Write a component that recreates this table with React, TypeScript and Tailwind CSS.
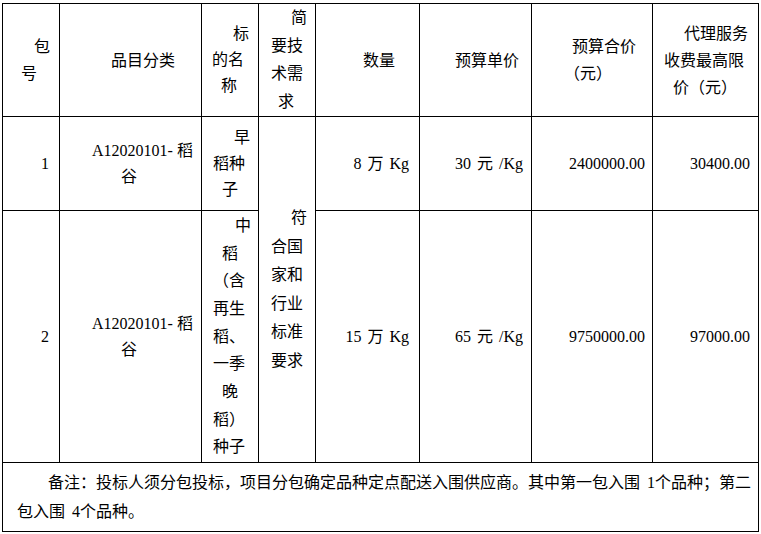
import React from "react";

function Line({ className, children }: { className: string; children: React.ReactNode }) {
  return <div className={"whitespace-nowrap " + className}>{children}</div>;
}

const cell = "bg-white flex flex-col justify-center";
const num = "bg-white flex items-center justify-end whitespace-nowrap leading-none [word-spacing:2px]";

function Code() {
  return (
    <>
      A12020101-<span className="inline-block w-[4px]"></span>稻
    </>
  );
}

export default function App() {
  return (
    <div className="w-[761px] h-[534px] bg-white pt-[3px] pl-[2px] font-['Liberation_Serif','Noto_Sans_CJK_SC',serif] text-[16px] text-black">
      <div className="grid w-[757px] grid-cols-[56px_141px_56px_56px_103px_111px_120px_105px] grid-rows-[112px_93px_251px_68px] gap-px border border-black bg-black">
        {/* header */}
        <div className={cell + " leading-[27px]"}>
          <Line className="pl-[31px]">包</Line>
          <Line className="pl-[18px]">号</Line>
        </div>
        <div className={cell + " leading-[27px]"}>
          <Line className="pl-[51px]">品目分类</Line>
        </div>
        <div className={cell + " leading-[26px]"}>
          <Line className="pl-[31px]">标</Line>
          <Line className="pl-[10px]">的名</Line>
          <Line className="pl-[19px]">称</Line>
        </div>
        <div className={cell + " leading-[28px]"}>
          <Line className="pl-[32px]">简</Line>
          <Line className="pl-[12px]">要技</Line>
          <Line className="pl-[12px]">术需</Line>
          <Line className="pl-[19px]">求</Line>
        </div>
        <div className={cell + " leading-[27px]"}>
          <Line className="pl-[47px]">数量</Line>
        </div>
        <div className={cell + " leading-[27px]"}>
          <Line className="pl-[35px]">预算单价</Line>
        </div>
        <div className={cell + " leading-[27px]"}>
          <Line className="pl-[40px]">预算合价</Line>
          <Line className="pl-[32px]">（元）</Line>
        </div>
        <div className={cell + " leading-[27px]"}>
          <Line className="pl-[31px]">代理服务</Line>
          <Line className="pl-[11px]">收费最高限</Line>
          <Line className="pl-[20px]">价（元）</Line>
        </div>

        {/* row 1 */}
        <div className={cell + " leading-[27px]"}>
          <Line className="pl-[38px]">1</Line>
        </div>
        <div className={cell + " leading-[26px]"}>
          <Line className="pl-[32px]"><Code /></Line>
          <Line className="pl-[61px]">谷</Line>
        </div>
        <div className={cell + " leading-[26px]"}>
          <Line className="pl-[32px]">早</Line>
          <Line className="pl-[11px]">稻种</Line>
          <Line className="pl-[20px]">子</Line>
        </div>
        <div className={cell + " row-span-2 leading-[28.5px]"}>
          <Line className="pl-[32px]">符</Line>
          <Line className="pl-[12px]">合国</Line>
          <Line className="pl-[12px]">家和</Line>
          <Line className="pl-[12px]">行业</Line>
          <Line className="pl-[12px]">标准</Line>
          <Line className="pl-[12px]">要求</Line>
        </div>
        <div className={num + " pr-[10px]"}>8 万 Kg</div>
        <div className={num + " pr-[8px]"}>30 元 /Kg</div>
        <div className={num + " pr-[7px]"}>2400000.00</div>
        <div className={num + " pr-[8px]"}>30400.00</div>

        {/* row 2 */}
        <div className={cell + " leading-[27px]"}>
          <Line className="pl-[38px]">2</Line>
        </div>
        <div className={cell + " leading-[26px]"}>
          <Line className="pl-[32px]"><Code /></Line>
          <Line className="pl-[61px]">谷</Line>
        </div>
        <div className={cell + " leading-[27.7px]"}>
          <Line className="pl-[33px]">中</Line>
          <Line className="pl-[20px]">稻</Line>
          <Line className="pl-[11px]">（含</Line>
          <Line className="pl-[11px]">再生</Line>
          <Line className="pl-[11px]">稻、</Line>
          <Line className="pl-[11px]">一季</Line>
          <Line className="pl-[20px]">晚</Line>
          <Line className="pl-[11px]">稻）</Line>
          <Line className="pl-[11px]">种子</Line>
        </div>
        <div className={num + " pr-[10px]"}>15 万 Kg</div>
        <div className={num + " pr-[8px]"}>65 元 /Kg</div>
        <div className={num + " pr-[7px]"}>9750000.00</div>
        <div className={num + " pr-[8px]"}>97000.00</div>

        {/* note */}
        <div className={cell + " col-span-8 pl-[14px] pr-[11px] leading-[29px] [word-spacing:3px]"}>
          <div className="whitespace-nowrap indent-[31px] text-justify [text-align-last:justify]">
            备注：投标人须分包投标，项目分包确定品种定点配送入围供应商。其中第一包入围 1个品种；第二
          </div>
          <div className="whitespace-nowrap">包入围 4个品种。</div>
        </div>
      </div>
    </div>
  );
}
